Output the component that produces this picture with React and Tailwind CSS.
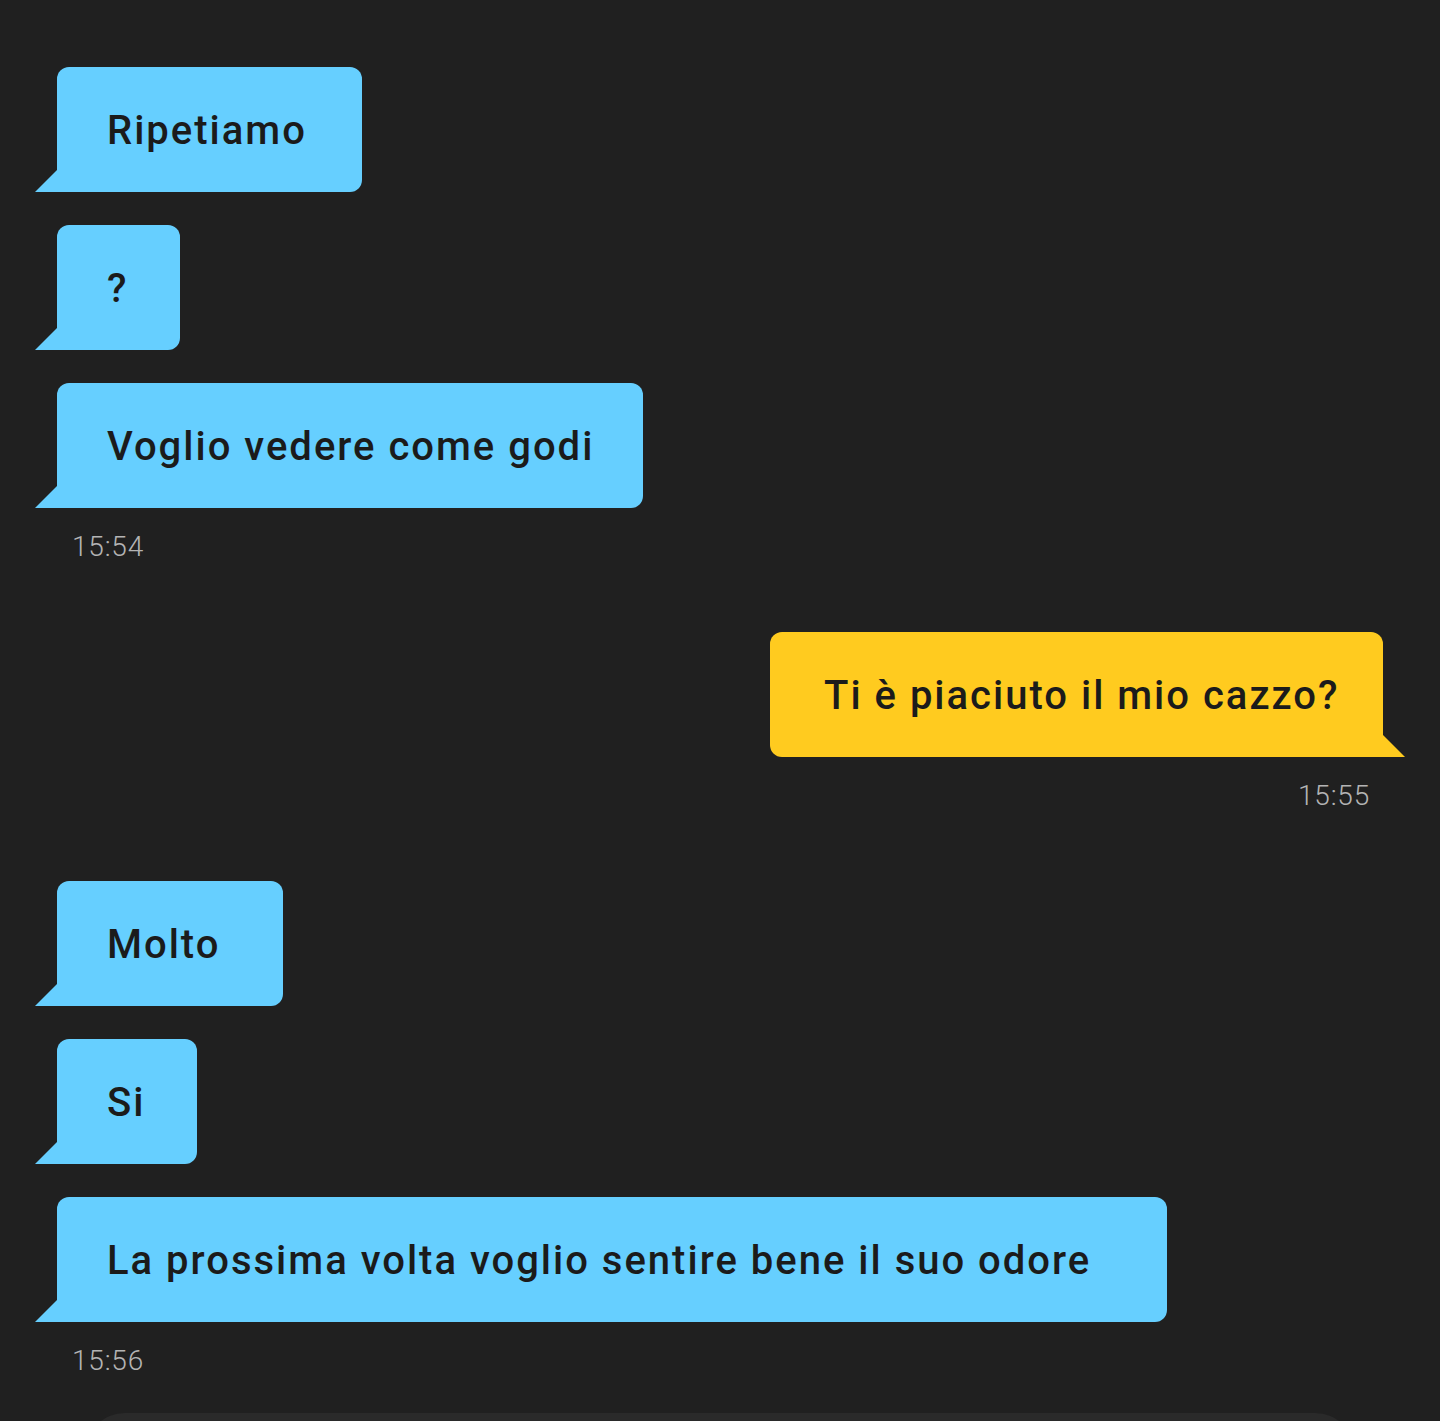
const FONT = { fontFamily: 'Roboto, "Noto Sans", sans-serif' }

const GROUPS = [
  {
    side: 'left',
    time: '15:54',
    messages: [
      { text: 'Ripetiamo', w: 'w-[305px]' },
      { text: '?', w: 'w-[123px]' },
      { text: 'Voglio vedere come godi', w: 'w-[586px]' },
    ],
  },
  { side: 'right', time: '15:55', messages: [{ text: 'Ti è piaciuto il mio cazzo?', w: 'w-[613px]' }] },
  {
    side: 'left',
    time: '15:56',
    messages: [
      { text: 'Molto', w: 'w-[226px]' },
      { text: 'Si', w: 'w-[140px]' },
      { text: 'La prossima volta voglio sentire bene il suo odore', w: 'w-[1110px]' },
    ],
  },
]

function Bubble({ text, w, side }) {
  const mine = side === 'right'
  return (
    <div className={`relative flex ${mine ? 'justify-end' : 'justify-start'}`}>
      <div
        className={`relative ${w} h-[125px] flex items-center pt-[3px] text-[40px] font-medium text-[#1b1b1b] tracking-[2px] whitespace-nowrap ${
          mine
            ? 'bg-[#ffcb1f] rounded-[12px] rounded-br-none pl-[54px]'
            : 'bg-[#66cfff] rounded-[12px] rounded-bl-none pl-[50px]'
        }`}
      >
        {text}
        {/* tail */}
        {mine ? (
          <svg className="absolute bottom-0 -right-[22px] w-[23px] h-[22px]" viewBox="0 0 23 22">
            <path d="M0 0 L1 0 L23 22 L0 22 Z" fill="#ffcb1f" />
          </svg>
        ) : (
          <svg className="absolute bottom-0 -left-[22px] w-[23px] h-[22px]" viewBox="0 0 23 22">
            <path d="M23 0 L22 0 L0 22 L23 22 Z" fill="#66cfff" />
          </svg>
        )}
      </div>
    </div>
  )
}

export default function App() {
  return (
    <div className="w-[1440px] h-[1421px] overflow-hidden bg-[#202020] flex flex-col" style={FONT}>
      <div className="flex flex-col px-[57px] pt-[67px]">
        {GROUPS.map((g, gi) => (
          <div key={gi} className={`flex flex-col ${gi > 0 ? 'mt-[65px]' : ''}`}>
            <div className="flex flex-col gap-[33px]">
              {g.messages.map((m, i) => (
                <Bubble key={i} text={m.text} w={m.w} side={g.side} />
              ))}
            </div>
            <div
              className={`mt-[19px] h-[40px] flex items-center text-[28px] font-light tracking-[0.8px] text-[#b4b4b4] ${
                g.side === 'right' ? 'justify-end pr-[13px]' : 'pl-[15px]'
              }`}
            >
              {g.time}
            </div>
          </div>
        ))}
      </div>
      {/* input bar */}
      <div className="mt-[32px] mx-[85px] h-[80px] shrink-0 rounded-[40px] bg-[#2a2a2a]" />
    </div>
  )
}
